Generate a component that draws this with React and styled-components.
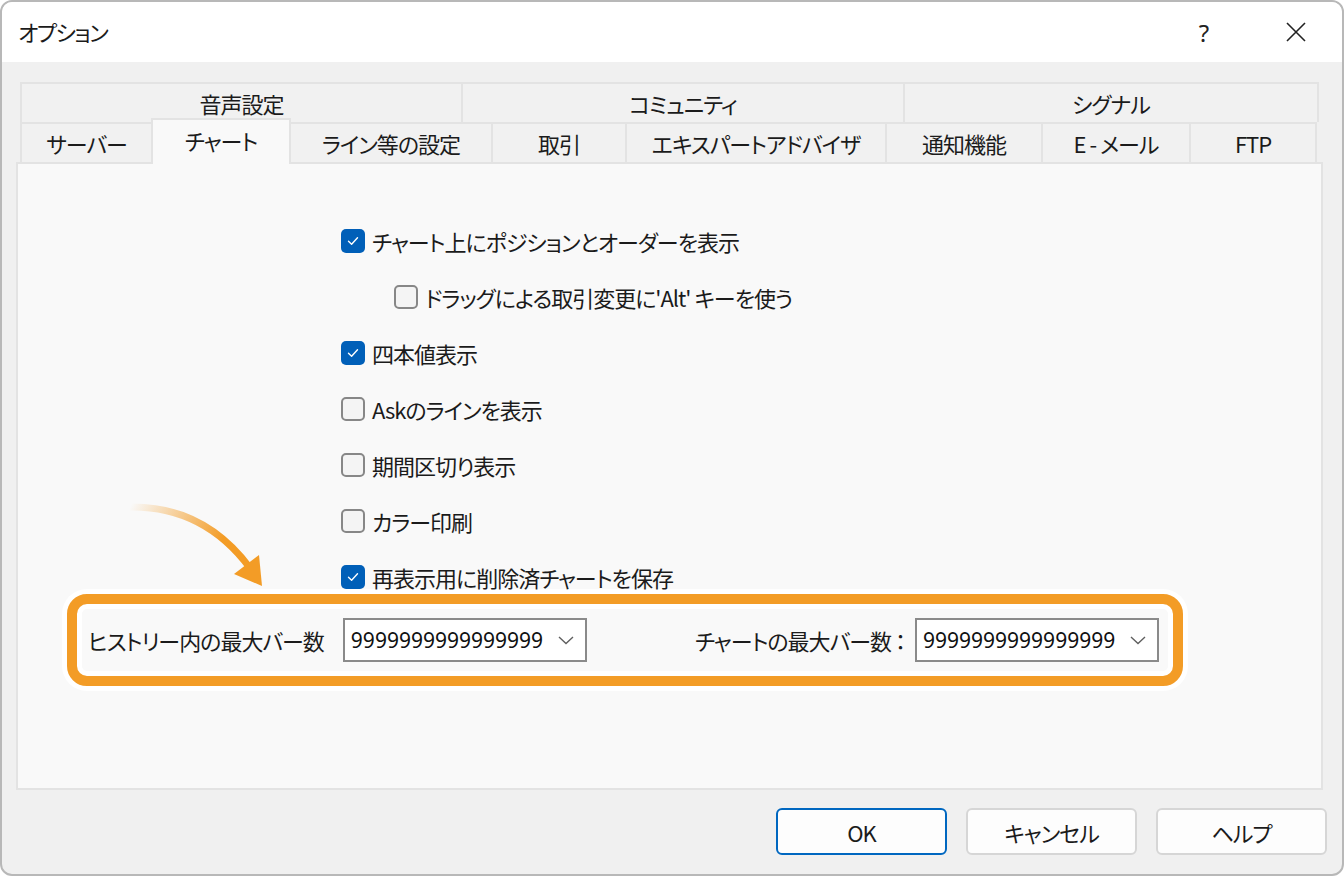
import styled, { createGlobalStyle } from "styled-components";

const Global = createGlobalStyle`
    html, body {
        margin: 0;
        padding: 0;
        background: #ffffff;
    }
    * {
        box-sizing: border-box;
    }
    body {
        font-family: "Noto Sans CJK JP", "Noto Sans", sans-serif;
        font-feature-settings: "palt";
        color: #1b1b1b;
    }
`

const Window = styled.div`
    position: relative;
    width: 1344px;
    height: 876px;
    border: 2px solid #b8b8b8;
    border-radius: 12px;
    overflow: hidden;
    background: #f0f0f0;
    display: flex;
    flex-direction: column;
`

const TitleBar = styled.div`
    height: 60px;
    background: #ffffff;
    display: flex;
    align-items: center;
    padding-left: 16px;

    .title {
        font-size: 22px;
        letter-spacing: -1.5px;
        flex: 1;
        margin-top: -2px;
    }
`

const TitleButton = styled.div`
    width: 92px;
    height: 60px;
    display: flex;
    align-items: center;
    justify-content: center;
    font-family: "Noto Sans", sans-serif;
    font-size: 24px;
    color: #222;
`

const Body = styled.div`
    flex: 1;
    padding-top: 20px;
    display: flex;
    flex-direction: column;
`

const Tabs = styled.div`
    margin-left: 18px;
    width: 1299px;
`

const TabRow = styled.div`
    display: flex;
    align-items: flex-end;
    height: 40px;
`

const Tab = styled.div`
    width: ${p => p.$w}px;
    height: ${p => p.$active ? 46 : 40}px;
    margin-bottom: ${p => p.$active ? -2 : 0}px;
    margin-right: ${p => p.$active ? -2 : 0}px;
    position: relative;
    z-index: ${p => p.$active ? 2 : 0};
    background: ${p => p.$active ? '#f9f9f9' : '#f1f1f1'};
    border-top: 2px solid #e3e3e3;
    border-left: 2px solid #e3e3e3;
    border-right: ${p => p.$active ? '2px solid #e3e3e3' : 'none'};
    display: flex;
    align-items: center;
    justify-content: center;
    padding-bottom: ${p => p.$active ? 4 : 0}px;
    font-size: 22px;
    letter-spacing: -1px;
    white-space: nowrap;

    &:last-child {
        border-right: 2px solid #e3e3e3;
    }
`

const Panel = styled.div`
    margin: 0 19px 0 14px;
    height: 628px;
    background: #f9f9f9;
    border: 2px solid #e3e3e3;
    padding: 61px 0 0 49px;
`

const CheckList = styled.div`
    margin-left: 274px;
    display: flex;
    flex-direction: column;
    gap: 24px;
`

const CheckRow = styled.div`
    height: 32px;
    display: flex;
    align-items: center;
    gap: 7px;
    margin-left: ${p => p.$indent ? 53 : 0}px;
    font-size: 22px;
    letter-spacing: -1px;
    white-space: nowrap;
`

const Box = styled.div`
    width: 24px;
    height: 24px;
    border-radius: 5px;
    flex-shrink: 0;
    display: flex;
    align-items: center;
    justify-content: center;
    background: ${p => p.$checked ? '#005fb8' : '#f4f4f4'};
    border: ${p => p.$checked ? 'none' : '2px solid #878787'};
`

const Highlight = styled.div`
    margin-top: 1px;
    width: 1116px;
    height: 92px;
    border: 10px solid #f39c26;
    border-radius: 20px;
    box-shadow: 0 0 0 5px #ffffff, inset 0 0 0 5px #ffffff;
    display: flex;
    align-items: center;
    padding: 0 14px 0 11px;
    font-size: 22px;
    white-space: nowrap;

    .label {
        letter-spacing: -1px;
    }
    .right {
        margin-left: auto;
        display: flex;
        align-items: center;
        gap: 10px;
    }
    .left {
        display: flex;
        align-items: center;
        gap: 19px;
    }
`

const Select = styled.div`
    width: 244px;
    height: 44px;
    background: #ffffff;
    border: 2px solid #8a8a8a;
    display: flex;
    align-items: center;
    justify-content: space-between;
    padding: 0 10px 0 6px;
    font-family: "Noto Sans", sans-serif;
    font-size: 21px;
    color: #111;
`

const ButtonBar = styled.div`
    margin-top: 18px;
    display: flex;
    justify-content: flex-end;
    gap: 19px;
    padding-right: 15px;
`

const Button = styled.div`
    width: 171px;
    height: 47px;
    border-radius: 6px;
    background: #fdfdfd;
    border: ${p => p.$primary ? '2px solid #0067c0' : '2px solid #d6d6d6'};
    display: flex;
    align-items: center;
    justify-content: center;
    font-size: 22px;
    letter-spacing: -1px;
`

const ArrowSvg = styled.svg`
    position: absolute;
    left: 110px;
    top: 490px;
    pointer-events: none;
`

function Check({checked}) {
    return (
        <Box $checked={checked}>
            {checked && (
                <svg width="14" height="14" viewBox="0 0 14 14">
                    <path d="M2.5 7.3 L5.6 10.2 L11.5 3.8" fill="none" stroke="#fff" strokeWidth="1.4"
                          strokeLinecap="round" strokeLinejoin="round"/>
                </svg>
            )}
        </Box>
    )
}

function Chevron() {
    return (
        <svg width="18" height="12" viewBox="0 0 18 12">
            <path d="M2 3 L9 9.5 L16 3" fill="none" stroke="#5f5f5f" strokeWidth="1.4"/>
        </svg>
    )
}

const topTabs = [
    ['音声設定', 441],
    ['コミュニティ', 442],
    ['シグナル', 416],
]

const bottomTabs = [
    ['サーバー', 131],
    ['チャート', 140, true],
    ['ライン等の設定', 202],
    ['取引', 134],
    ['エキスパートアドバイザ', 260],
    ['通知機能', 156],
    ['E - メール', 148],
    ['FTP', 128],
]

const options = [
    ['チャート上にポジションとオーダーを表示', true],
    ["ドラッグによる取引変更に'Alt' キーを使う", false, true],
    ['四本値表示', true],
    ['Askのラインを表示', false],
    ['期間区切り表示', false],
    ['カラー印刷', false],
    ['再表示用に削除済チャートを保存', true],
]

function App() {
    return (
        <Window>
            <Global/>
            <TitleBar>
                <div className="title">オプション</div>
                <TitleButton>?</TitleButton>
                <TitleButton>
                    <svg width="20" height="20" viewBox="0 0 20 20">
                        <path d="M1 1 L19 19 M19 1 L1 19" stroke="#222" strokeWidth="1.6"/>
                    </svg>
                </TitleButton>
            </TitleBar>
            <Body>
                <Tabs>
                    <TabRow>
                        {topTabs.map(([t, w]) => <Tab key={t} $w={w}>{t}</Tab>)}
                    </TabRow>
                    <TabRow>
                        {bottomTabs.map(([t, w, a]) => <Tab key={t} $w={w} $active={a}>{t}</Tab>)}
                    </TabRow>
                </Tabs>
                <Panel>
                    <CheckList>
                        {options.map(([t, c, indent]) => (
                            <CheckRow key={t} $indent={indent}>
                                <Check checked={c}/>
                                <span>{t}</span>
                            </CheckRow>
                        ))}
                    </CheckList>
                    <Highlight>
                        <div className="left">
                            <span className="label">ヒストリー内の最大バー数</span>
                            <Select>9999999999999999<Chevron/></Select>
                        </div>
                        <div className="right">
                            <span className="label">チャートの最大バー数 ：</span>
                            <Select>9999999999999999<Chevron/></Select>
                        </div>
                    </Highlight>
                </Panel>
                <ButtonBar>
                    <Button $primary>OK</Button>
                    <Button>キャンセル</Button>
                    <Button>ヘルプ</Button>
                </ButtonBar>
            </Body>
            <ArrowSvg width="170" height="110" viewBox="0 0 170 110">
                <defs>
                    <linearGradient id="arr" x1="18" y1="15" x2="140" y2="80" gradientUnits="userSpaceOnUse">
                        <stop offset="0" stopColor="#f39c26" stopOpacity="0"/>
                        <stop offset="0.7" stopColor="#f39c26" stopOpacity="1"/>
                    </linearGradient>
                </defs>
                <path d="M18 15 Q92 14 138 76" fill="none" stroke="url(#arr)" strokeWidth="7"/>
                <polygon points="150,94 122,82 147,63" fill="#f39c26"/>
            </ArrowSvg>
        </Window>
    );
}

export default App;
